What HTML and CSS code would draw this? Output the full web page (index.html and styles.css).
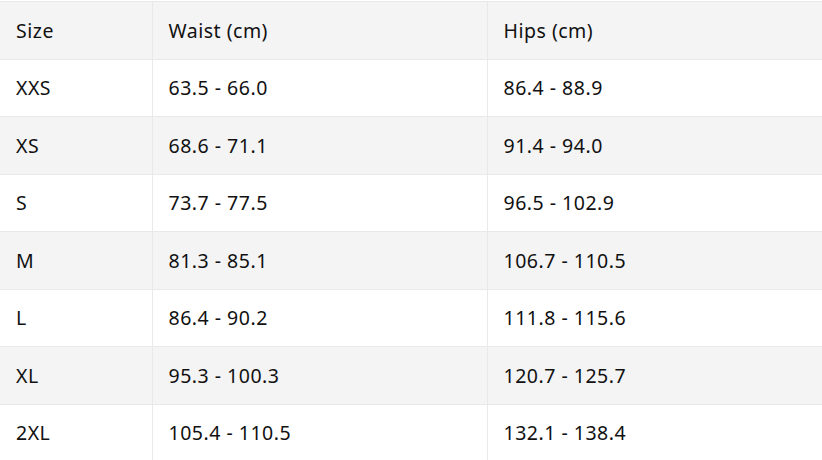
FILE: index.html
```html
<!DOCTYPE html>
<html lang="en">
<head>
<meta charset="utf-8">
<title>Size chart</title>
<link rel="stylesheet" href="styles.css">
</head>
<body>
<table class="size-table">
  <thead>
    <tr><th class="col-size">Size</th><th class="col-waist">Waist (cm)</th><th>Hips (cm)</th></tr>
  </thead>
  <tbody>
    <tr><td>XXS</td><td>63.5 - 66.0</td><td>86.4 - 88.9</td></tr>
    <tr><td>XS</td><td>68.6 - 71.1</td><td>91.4 - 94.0</td></tr>
    <tr><td>S</td><td>73.7 - 77.5</td><td>96.5 - 102.9</td></tr>
    <tr><td>M</td><td>81.3 - 85.1</td><td>106.7 - 110.5</td></tr>
    <tr><td>L</td><td>86.4 - 90.2</td><td>111.8 - 115.6</td></tr>
    <tr><td>XL</td><td>95.3 - 100.3</td><td>120.7 - 125.7</td></tr>
    <tr><td>2XL</td><td>105.4 - 110.5</td><td>132.1 - 138.4</td></tr>
  </tbody>
</table>
</body>
</html>
```
FILE: styles.css
```css
html, body {
  margin: 0;
  padding: 0;
  background: #ffffff;
}
body {
  padding-top: 1px;
  font-family: "Noto Sans", "Open Sans", "Liberation Sans", sans-serif;
  color: #111111;
}
.size-table {
  width: 822px;
  border-collapse: collapse;
  table-layout: fixed;
  font-size: 19.5px;
  letter-spacing: 0.5px;
}
.size-table th,
.size-table td {
  height: 57.5px;
  padding: 0 16px;
  text-align: left;
  font-weight: 400;
  border: 1px solid #e9e9e9;
  box-sizing: border-box;
  vertical-align: middle;
}
.size-table tr > :first-child { border-left: none; }
.size-table tr > :last-child { border-right: none; }
.col-size { width: 152px; }
.col-waist { width: 335px; }
.size-table thead th { background: #f4f4f4; }
.size-table tbody tr:nth-child(even) td { background: #f4f4f4; }
```
